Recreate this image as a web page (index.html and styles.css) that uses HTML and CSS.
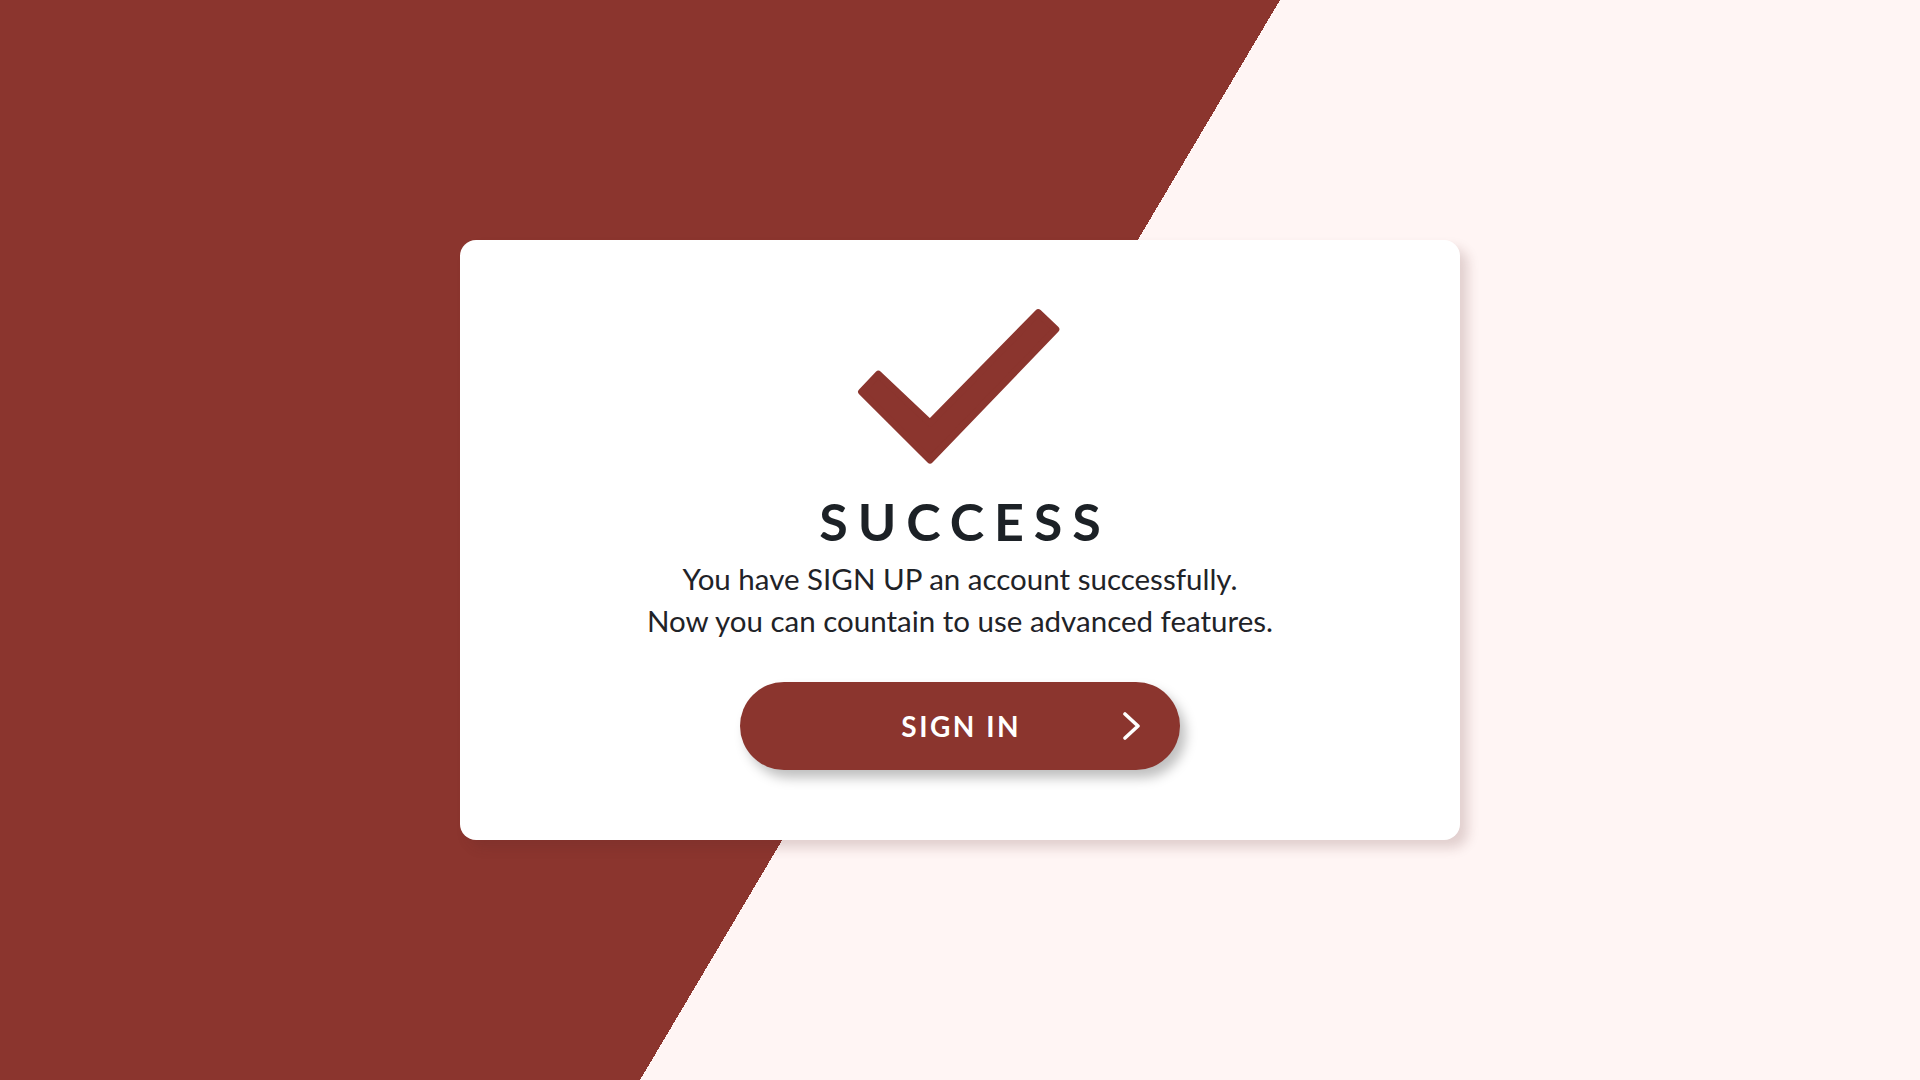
FILE: index.html
```html
<!DOCTYPE html>
<html lang="en">
<head>
<meta charset="utf-8">
<title>Success</title>
<link rel="stylesheet" href="styles.css">
</head>
<body>
<main class="card">
  <svg class="check" width="220" height="170" viewBox="850 300 220 170" aria-hidden="true">
    <path d="M861.6,391.8 L878.4,374.2 L930,423 L1038.2,312.6 L1055.8,329.4 L930,460 Z" fill="#8b352e" stroke="#8b352e" stroke-width="7" stroke-linejoin="round"/>
  </svg>
  <h1 class="title">SUCCESS</h1>
  <p class="message">You have SIGN UP an account successfully.<br>Now you can countain to use advanced features.</p>
  <button class="signin" type="button">
    <span class="signin-spacer"></span>
    <span class="signin-label">SIGN IN</span>
    <svg class="signin-arrow" width="20" height="28" viewBox="0 0 20 28" aria-hidden="true">
      <polyline points="3,2 16,14 3,26" fill="none" stroke="#ffffff" stroke-width="3.6" stroke-linecap="round" stroke-linejoin="round"/>
    </svg>
  </button>
</main>
</body>
</html>
```

FILE: styles.css
```css
html, body {
  margin: 0;
  padding: 0;
}

body {
  width: 1920px;
  height: 1080px;
  overflow: hidden;
  display: flex;
  align-items: center;
  justify-content: center;
  font-family: "Lato", "Liberation Sans", sans-serif;
  background: linear-gradient(120.65deg, #8b352e 50%, #fff5f4 50%);
}

.card {
  box-sizing: border-box;
  width: 1000px;
  height: 600px;
  background: #ffffff;
  border-radius: 16px;
  box-shadow: 8px 8px 12px rgba(90, 40, 40, 0.18);
  display: flex;
  flex-direction: column;
  align-items: center;
  padding-top: 60px;
}

.check {
  display: block;
}

.title {
  margin: 26px 0 0 0;
  font-size: 52px;
  line-height: 50px;
  font-weight: 700;
  letter-spacing: 0.19em;
  padding-left: 0.19em;
  color: #1c2126;
}

.message {
  margin: 12px 0 0 0;
  font-size: 29.5px;
  line-height: 42px;
  font-weight: 400;
  color: #1f2328;
  text-align: center;
}

.signin {
  margin-top: 40px;
  width: 440px;
  height: 88px;
  border: none;
  border-radius: 44px;
  background: #8b352e;
  box-shadow: 6px 8px 12px rgba(0, 0, 0, 0.25);
  display: grid;
  grid-template-columns: 1fr auto 1fr;
  align-items: center;
  padding: 0 38px;
  font-family: inherit;
  cursor: pointer;
}

.signin-label {
  color: #ffffff;
  font-size: 28px;
  font-weight: 700;
  letter-spacing: 0.09em;
  padding-left: 0.09em;
}

.signin-arrow {
  justify-self: end;
  display: block;
}
```
